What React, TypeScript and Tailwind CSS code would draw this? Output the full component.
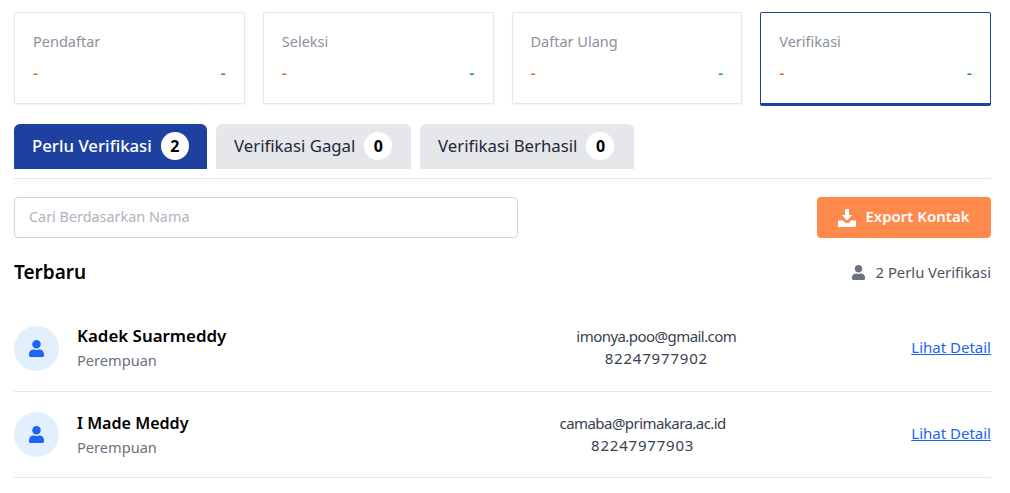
import { FaUser } from 'react-icons/fa';

const KARTU = [
  { id: 'pendaftar', nama: 'Pendaftar' },
  { id: 'seleksi', nama: 'Seleksi' },
  { id: 'daftar', nama: 'Daftar Ulang' },
  { id: 'verifikasi', nama: 'Verifikasi', aktif: true },
];

const TAB = [
  { nama: 'Perlu Verifikasi', jumlah: 2, lebar: 'w-[193px]', aktif: true },
  { nama: 'Verifikasi Gagal', jumlah: 0, lebar: 'w-[195px]' },
  { nama: 'Verifikasi Berhasil', jumlah: 0, lebar: 'w-[214px]' },
];

const CALON = [
  { nama: 'Kadek Suarmeddy', ukuran: 'text-[16.900px]', email: 'imonya.poo@gmail.com', telp: '82247977902' },
  { nama: 'I Made Meddy', ukuran: 'text-[16.100px]', email: 'camaba@primakara.ac.id', telp: '82247977903' },
];

function IconDownload() {
  return (
    <svg width="18" height="18" viewBox="0 0 18 18" fill="currentColor">
      <path d="M7 0h4v6h3.2L9 11.4 3.800 6H7z" />
      <path d="M0 11.500h4.800L7.400 14h3.200l2.600-2.500H18V18H0z" />
    </svg>
  );
}

export default function App() {
  return (
    <div className="w-[1010px] h-[493px] overflow-hidden bg-white pt-3 pl-[14px] pr-[19px] font-['Noto_Sans',sans-serif]">
      <div className="flex gap-[18px]">
        {KARTU.map(k => (
          <div
            key={k.id}
            className={`w-[231px] rounded-[2px] px-[18px] pt-[17px] border ${
              k.aktif ? 'border-[#1e40a0] border-b-[3px] h-[94px]' : 'h-[92px] border-[#e5e7eb] shadow-[0_1px_2px_rgba(0,0,0,0.05)]'
            }`}
          >
            <p className="text-[14.500px] leading-[22px] text-[#8b929c]">{k.nama}</p>
            <div className="flex justify-between mt-[11px] text-[16px] leading-[20px] font-medium">
              <span className="text-[#ff5a1f]">-</span>
              <span className="text-[#0e9f6e]">-</span>
            </div>
          </div>
        ))}
      </div>

      <div className="flex gap-[9px] mt-[18px] pb-[9px] border-b border-[#e5e7eb]">
        {TAB.map(t => (
          <div
            key={t.nama}
            className={`${t.lebar} h-[45px] rounded-t-[6px] pl-[18px] pb-[1px] flex items-center gap-[9px] text-[16.800px] ${
              t.aktif ? 'bg-[#1e40a0] text-white font-medium' : 'bg-[#e5e7eb] text-[#1f2937]'
            }`}
          >
            <span className="whitespace-nowrap">{t.nama}</span>
            <span className="w-7 h-7 rounded-full bg-white text-black text-[16px] font-bold flex items-center justify-center">
              {t.jumlah}
            </span>
          </div>
        ))}
      </div>

      <div className="flex justify-between mt-[18px]">
        <input
          placeholder="Cari Berdasarkan Nama"
          className="w-[504px] h-[41px] rounded-[4px] border border-[#d1d5db] px-[14px] pb-[2px] text-[14.400px] outline-none placeholder:text-[#adb3bd]"
        />
        <button className="w-[174px] h-[41px] rounded-[4px] bg-[#ff8a4c] text-white text-[15px] font-semibold flex items-center justify-center gap-[9px]">
          <IconDownload />
          <span className="pb-[2px]">Export Kontak</span>
        </button>
      </div>

      <div className="flex justify-between items-center mt-[20px] h-[28px]">
        <h2 className="text-[19px] font-semibold text-black">Terbaru</h2>
        <div className="flex items-center gap-[10px] text-[14.800px] text-[#4b5563]">
          <FaUser className="w-[15px] h-[15px] text-[#6b7280]" />
          2 Perlu Verifikasi
        </div>
      </div>

      <div className="mt-[19px]">
        {CALON.map(c => (
          <div key={c.nama} className="flex items-center h-[86px] border-b border-[#e5e7eb] first:h-[87px]">
            <div className="w-[45px] h-[45px] rounded-full bg-[#e1effe] flex items-center justify-center text-[#1c64f2]">
              <FaUser className="w-[17px] h-[17px]" />
            </div>
            <div className="ml-[18px]">
              <p className={`${c.ukuran} leading-[24px] font-semibold text-black whitespace-nowrap`}>{c.nama}</p>
              <p className="text-[14.600px] leading-[24px] text-[#6b7280]">Perempuan</p>
            </div>
            <div className="flex-[2]" />
            <div className="mb-[2px] text-center leading-[22px] text-[#374151]">
              <p className="text-[15px] tracking-[-0.55px]">{c.email}</p>
              <p className="text-[15px] tracking-[0.8px]">{c.telp}</p>
            </div>
            <div className="flex-[1]" />
            <a className="mb-[2px] text-[15px] text-[#1c64f2] underline">Lihat Detail</a>
          </div>
        ))}
      </div>
    </div>
  );
}
